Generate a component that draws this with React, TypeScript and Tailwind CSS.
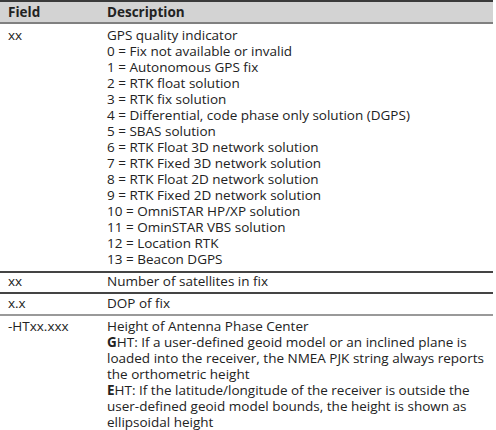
export default function App() {
  const qualities = [
    "0 = Fix not available or invalid",
    "1 = Autonomous GPS fix",
    "2 = RTK float solution",
    "3 = RTK fix solution",
    "4 = Differential, code phase only solution (DGPS)",
    "5 = SBAS solution",
    "6 = RTK Float 3D network solution",
    "7 = RTK Fixed 3D network solution",
    "8 = RTK Float 2D network solution",
    "9 = RTK Fixed 2D network solution",
    "10 = OmniSTAR HP/XP solution",
    "11 = OminSTAR VBS solution",
    "12 = Location RTK",
    "13 = Beacon DGPS",
  ];

  return (
    <div
      className="w-[496px] h-[430px] bg-white text-[13.5px] leading-4 text-[#222]"
      style={{ fontFamily: '"Open Sans", sans-serif' }}
    >
      <table className="w-[493px] border-collapse">
        <thead>
          {/* Header */}
          <tr className="bg-[#d3d3d3] border-t-2 border-t-[#3a3a3a] border-b-2 border-b-[#808080]">
            <th className="w-[99px] text-left font-bold pl-2 pt-[2px] pb-[2px] h-[22px]">Field</th>
            <th className="text-left font-bold pl-2 pt-[2px] pb-[2px]">Description</th>
          </tr>
        </thead>
        <tbody>
          <tr className="border-b-2 border-b-[#444]">
            <td className="align-top pl-2 pt-[3px] pb-[4px]">xx</td>
            <td className="align-top pl-2 pt-[3px] pb-[4px]">
              <div>GPS quality indicator</div>
              {qualities.map((q) => (
                <div key={q}>{q}</div>
              ))}
            </td>
          </tr>
          <tr className="border-b-2 border-b-[#444]">
            <td className="align-top pl-2 pt-0 pb-[3px]">xx</td>
            <td className="align-top pl-2 pt-0 pb-[3px]">Number of satellites in fix</td>
          </tr>
          <tr className="border-b-2 border-b-[#999]">
            <td className="align-top pl-2 pt-[1px] pb-[3px]">x.x</td>
            <td className="align-top pl-2 pt-[1px] pb-[3px]">DOP of fix</td>
          </tr>
          <tr>
            <td className="align-top pl-2 pt-[2px]">-HTxx.xxx</td>
            <td className="align-top pl-2 pt-[2px] pr-0">
              <div>Height of Antenna Phase Center</div>
              <div>
                <b>G</b>HT: If a user-defined geoid model or an inclined plane is loaded into the receiver, the NMEA PJK string always reports the orthometric height
              </div>
              <div>
                <b>E</b>HT: If the latitude/longitude of the receiver is outside the user-defined geoid model bounds, the height is shown as ellipsoidal height
              </div>
            </td>
          </tr>
        </tbody>
      </table>
    </div>
  );
}
